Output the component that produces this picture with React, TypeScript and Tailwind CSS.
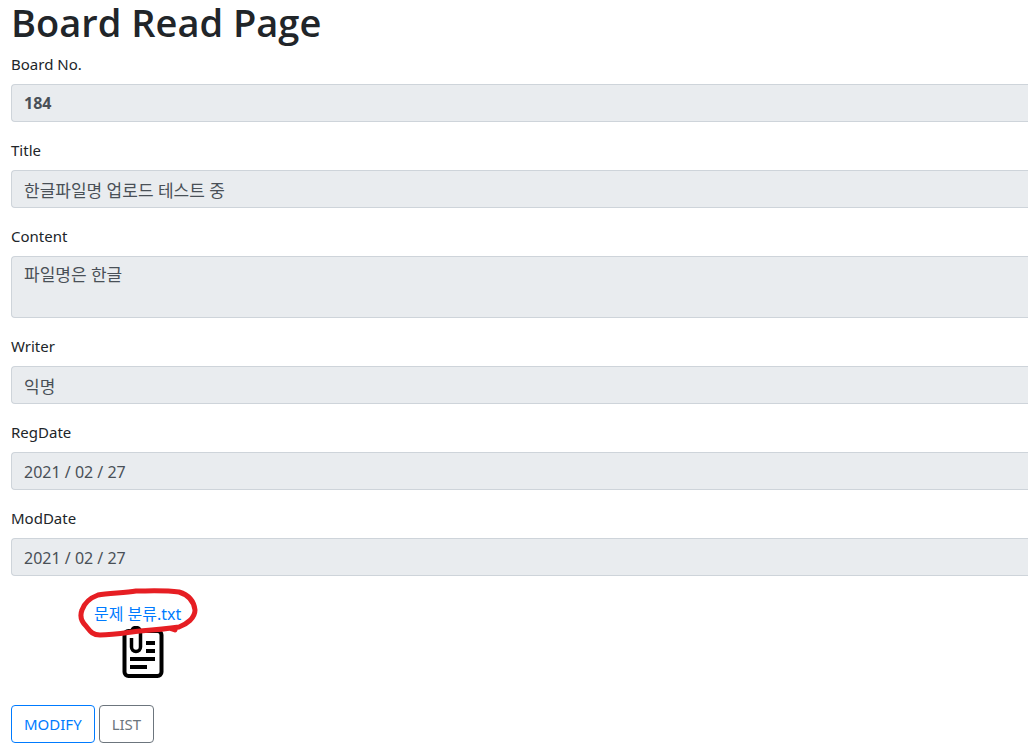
import type { ReactNode } from "react";

const control =
  "block w-full rounded-l border border-r-0 border-[#ced4da] bg-[#e9ecef] px-3 text-[#495057] outline-none";

interface FieldProps {
  id: string;
  label: string;
  children: ReactNode;
}

function Field({ id, label, children }: FieldProps) {
  return (
    <div className="mb-4">
      <label htmlFor={id} className="mb-2 block text-[15px] leading-6">
        {label}
      </label>
      {children}
    </div>
  );
}

function FileIcon() {
  return (
    <svg viewBox="0 0 44 54" className="h-[54px] w-11" fill="none" stroke="#000" aria-hidden="true">
      <rect x="3.500" y="5" width="37" height="45" rx="4" strokeWidth="4" />
      <path d="M10.500 12v9a4.500 4.500 0 0 0 9 0V6a4.500 4.500 0 0 0-9 0" strokeWidth="3.500" />
      <path d="M25 17h9M25 25h9M9 33h25M9 41h17" strokeWidth="4" />
    </svg>
  );
}

function RedCircle() {
  return (
    <svg
      viewBox="0 0 124 52"
      className="pointer-events-none absolute -top-3.5 -left-5 h-[52px] w-[124px]"
      fill="none"
      stroke="#e61e23"
      strokeWidth="5"
      strokeLinecap="round"
      strokeLinejoin="round"
      aria-hidden="true"
    >
      <path d="M62 3C50 5 34 5 24 7C16 10 10 16 8 22C6 27 7 33 12 38C16 43 18 47 26 47C39 47 50 45 66 43C80 42 92 41 105 39C113 36 121 30 121 22C120 14 115 7 105 4C90 2 74 3 62 3Z" />
      <path d="M98 41l3 1" />
    </svg>
  );
}

export default function App() {
  return (
    <main className="min-h-screen bg-white pl-[11px] font-['Noto_Sans','Noto_Sans_CJK_KR',sans-serif] text-[#212529]">
      <h1 className="mb-2 font-['Open_Sans',sans-serif] text-[38px] leading-[44px] font-semibold">Board Read Page</h1>

      <Field id="bno" label="Board No.">
        <input id="bno" className={`${control} h-[38px] text-base font-bold`} value="184" readOnly />
      </Field>
      <Field id="title" label="Title">
        <input id="title" className={`${control} h-[38px] text-[17px]`} value="한글파일명 업로드 테스트 중" readOnly />
      </Field>
      <Field id="content" label="Content">
        <textarea
          id="content"
          className={`${control} h-[62px] resize-none overflow-hidden py-1.5 text-[17px] leading-6`}
          value="파일명은 한글"
          readOnly
        />
      </Field>
      <Field id="writer" label="Writer">
        <input id="writer" className={`${control} h-[38px] text-[17px]`} value="익명" readOnly />
      </Field>
      <Field id="regDate" label="RegDate">
        <input id="regDate" className={`${control} h-[38px] pt-0.5 text-base`} value="2021 / 02 / 27" readOnly />
      </Field>
      <Field id="modDate" label="ModDate">
        <input id="modDate" className={`${control} h-[38px] pt-0.5 text-base`} value="2021 / 02 / 27" readOnly />
      </Field>

      <ul className="mb-[25px] pt-2.5 pl-[83px]">
        <li className="flex w-24 flex-col">
          <div className="relative">
            <a href="#file" className="block text-base leading-6 whitespace-nowrap text-[#007bff]">
              문제 분류.txt
            </a>
            <RedCircle />
          </div>
          <div className="pl-[27px]">
            <FileIcon />
          </div>
        </li>
      </ul>

      <div className="flex gap-1 text-[15px] leading-6">
        <button type="button" className="h-[38px] rounded border border-[#007bff] px-3 text-[#007bff]">
          MODIFY
        </button>
        <button type="button" className="h-[38px] rounded border border-[#6c757d] px-3 text-[#6c757d]">
          LIST
        </button>
      </div>
    </main>
  );
}
